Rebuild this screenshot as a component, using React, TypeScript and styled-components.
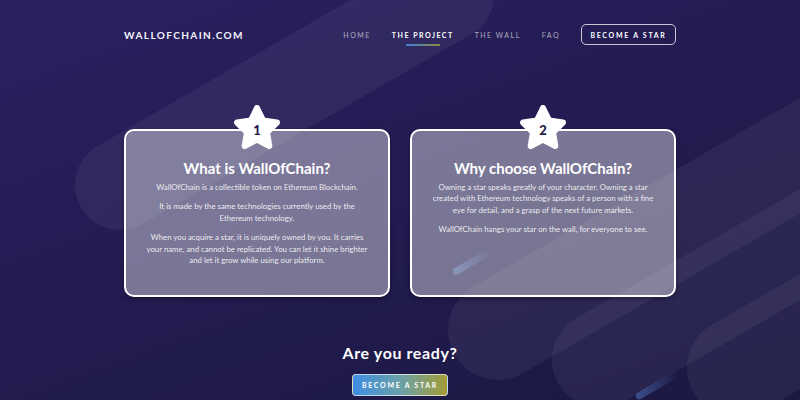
import React from "react";
import styled, { createGlobalStyle } from "styled-components";

const GlobalStyle = createGlobalStyle`
  html, body { margin: 0; padding: 0; }
  body {
    font-family: Lato, "Open Sans", sans-serif;
    background: #1d1945;
  }
  * { box-sizing: border-box; }
`;

const Page = styled.div`
  position: relative;
  width: 800px;
  height: 400px;
  overflow: hidden;
  background: linear-gradient(160deg, #2a2160 0%, #231c52 45%, #1b1842 100%);
  color: #fff;
`;

const Backdrop = styled.svg`
  position: absolute;
  inset: 0;
  width: 800px;
  height: 400px;
  pointer-events: none;
`;

const Content = styled.div`
  position: relative;
  width: 552px;
  margin: 0 auto;
  padding-top: 24px;
  display: flex;
  flex-direction: column;
`;

const Header = styled.header`
  display: flex;
  align-items: center;
  justify-content: space-between;
  height: 21px;
`;

const Logo = styled.div`
  font-size: 10px;
  font-weight: 700;
  letter-spacing: 1.4px;
  color: #f4f3fa;
`;

const Nav = styled.nav`
  display: flex;
  align-items: center;
  gap: 21px;
`;

const NavLink = styled.a<{ $active?: boolean }>`
  position: relative;
  font-size: 7px;
  letter-spacing: 1.5px;
  font-weight: ${(p) => (p.$active ? 700 : 400)};
  color: ${(p) => (p.$active ? "#ffffff" : "rgba(255,255,255,0.62)")};
  text-decoration: none;
  &::after {
    content: "";
    display: ${(p) => (p.$active ? "block" : "none")};
    position: absolute;
    left: 50%;
    bottom: -7px;
    width: 34px;
    height: 2px;
    transform: translateX(-50%);
    background: linear-gradient(90deg, #3d7fd6, #8d8b3c);
  }
`;

const OutlineButton = styled.a`
  display: flex;
  align-items: center;
  justify-content: center;
  width: 95px;
  height: 21px;
  border: 1px solid rgba(255, 255, 255, 0.75);
  border-radius: 5px;
  font-size: 7px;
  font-weight: 700;
  letter-spacing: 1.7px;
  color: #fff;
  text-decoration: none;
`;

const Cards = styled.section`
  display: grid;
  grid-template-columns: 1fr 1fr;
  gap: 20px;
  margin-top: 84px;
`;

const Card = styled.article`
  position: relative;
  height: 168px;
  border: 2px solid #ffffff;
  border-radius: 10px;
  background: rgba(255, 255, 255, 0.4);
  box-shadow: 0 2px 4px rgba(0, 0, 0, 0.35);
  padding: 27px 14px 0;
  display: flex;
  flex-direction: column;
  align-items: center;
  text-align: center;
`;

const StarBadge = styled.div`
  position: absolute;
  top: -26px;
  left: 50%;
  transform: translateX(-50%);
  width: 48px;
  height: 48px;
`;

const StarNumber = styled.span`
  position: absolute;
  left: 0;
  right: 0;
  top: 17px;
  text-align: center;
  font-size: 13px;
  font-weight: 900;
  color: #1e1a46;
  line-height: 16px;
`;

const CardTitle = styled.h2`
  margin: 0;
  font-size: 15px;
  line-height: 20px;
  font-weight: 700;
  color: #fff;
`;

const CardText = styled.p`
  margin: 4px 0 0;
  font-size: 7.8px;
  line-height: 11.4px;
  color: rgba(255, 255, 255, 0.88);
  & + & {
    margin-top: 8px;
  }
`;

const Ready = styled.section`
  display: flex;
  flex-direction: column;
  align-items: center;
  margin-top: 46px;
`;

const ReadyTitle = styled.h3`
  margin: 0;
  font-size: 16px;
  line-height: 20px;
  font-weight: 700;
  letter-spacing: 0.6px;
  color: #fff;
`;

const GradientButton = styled.a`
  margin-top: 11px;
  display: flex;
  align-items: center;
  justify-content: center;
  width: 96px;
  height: 22px;
  border: 1px solid rgba(255, 255, 255, 0.65);
  border-radius: 4px;
  background: linear-gradient(90deg, #3f8de2 0%, #6aa0a8 50%, #a49c36 100%);
  font-size: 7px;
  font-weight: 700;
  letter-spacing: 1.7px;
  color: #fff;
  text-decoration: none;
`;

const starPoints = (() => {
  const pts: string[] = [];
  for (let i = 0; i < 10; i++) {
    const r = i % 2 === 0 ? 21 : 10.5;
    const a = (Math.PI / 5) * i - Math.PI / 2;
    pts.push(`${(r * Math.cos(a)).toFixed(2)},${(r * Math.sin(a)).toFixed(2)}`);
  }
  return pts.join(" ");
})();

const Star: React.FC<{ n: number }> = ({ n }) => (
  <StarBadge>
    <svg width="48" height="48" viewBox="-24 -24 48 48">
      <polygon
        points={starPoints}
        fill="#ffffff"
        stroke="#ffffff"
        strokeWidth="6"
        strokeLinejoin="round"
      />
    </svg>
    <StarNumber>{n}</StarNumber>
  </StarBadge>
);

const Pill: React.FC<{ cx: number; cy: number; r: number; len: number; o?: number }> = ({
  cx,
  cy,
  r,
  len,
  o = 0.055,
}) => (
  <rect
    x={cx - r}
    y={cy - r}
    width={len + 2 * r}
    height={2 * r}
    rx={r}
    fill="#ffffff"
    fillOpacity={o}
    transform={`rotate(-30 ${cx} ${cy})`}
  />
);

export default function App() {
  return (
    <>
      <GlobalStyle />
      <Page>
        <Backdrop viewBox="0 0 800 400">
          <defs>
            <linearGradient id="streak" x1="0" y1="0" x2="1" y2="0">
              <stop offset="0" stopColor="#5a86d0" stopOpacity="0.5" />
              <stop offset="1" stopColor="#5a86d0" stopOpacity="0" />
            </linearGradient>
          </defs>
          <Pill cx={120} cy={185} r={45} len={380} />
          <Pill cx={498} cy={330} r={50} len={800} />
          <Pill cx={600} cy={360} r={48} len={800} />
          <Pill cx={737} cy={368} r={50} len={800} />
          <rect x={453} y={268} width={44} height={7} rx={3.5} fill="url(#streak)" transform="rotate(-30 456 272)" />
          <rect x={636} y={392} width={48} height={7} rx={3.5} fill="url(#streak)" transform="rotate(-30 640 396)" />
        </Backdrop>
        <Content>
          <Header>
            <Logo>WALLOFCHAIN.COM</Logo>
            <Nav>
              <NavLink>HOME</NavLink>
              <NavLink $active>THE PROJECT</NavLink>
              <NavLink>THE WALL</NavLink>
              <NavLink>FAQ</NavLink>
              <OutlineButton>BECOME A STAR</OutlineButton>
            </Nav>
          </Header>
          <Cards>
            <Card>
              <Star n={1} />
              <CardTitle>What is WallOfChain?</CardTitle>
              <CardText>WallOfChain is a collectible token on Ethereum Blockchain.</CardText>
              <CardText>
                It is made by the same technologies currently used by the
                <br />
                Ethereum technology.
              </CardText>
              <CardText>
                When you acquire a star, it is uniquely owned by you. It carries
                <br />
                your name, and cannot be replicated. You can let it shine brighter
                <br />
                and let it grow while using our platform.
              </CardText>
            </Card>
            <Card>
              <Star n={2} />
              <CardTitle>Why choose WallOfChain?</CardTitle>
              <CardText>
                Owning a star speaks greatly of your character. Owning a star
                <br />
                created with Ethereum technology speaks of a person with a fine
                <br />
                eye for detail, and a grasp of the next future markets.
              </CardText>
              <CardText>WallOfChain hangs your star on the wall, for everyone to see.</CardText>
            </Card>
          </Cards>
          <Ready>
            <ReadyTitle>Are you ready?</ReadyTitle>
            <GradientButton>BECOME A STAR</GradientButton>
          </Ready>
        </Content>
      </Page>
    </>
  );
}
